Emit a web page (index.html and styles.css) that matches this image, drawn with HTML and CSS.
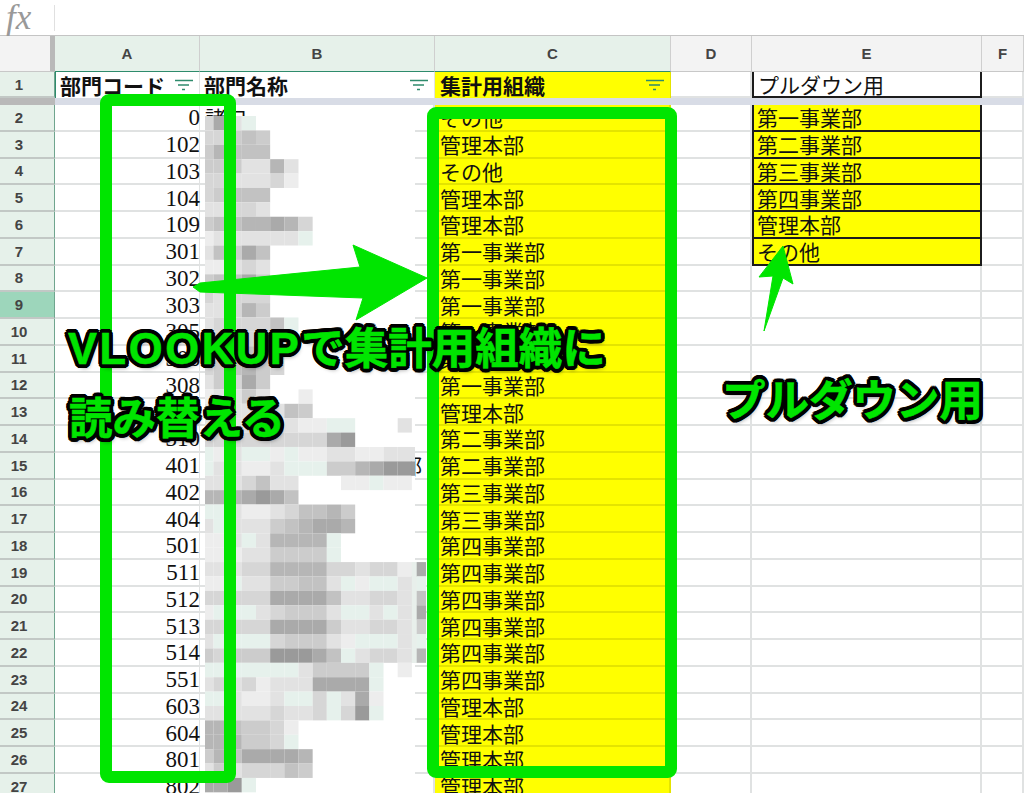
FILE: index.html
```html
<!DOCTYPE html>
<html lang="ja">
<head>
    <meta charset="UTF-8">
    <title>VLOOKUP</title>
    <link rel="stylesheet" href="styles.css">
</head>
<body>
    <div class="formula-bar">
        <span class="fx">fx</span>
        <span class="fx-sep"></span>
    </div>

    <div class="sheet">
        <!-- Column headers -->
        <div class="corner"></div>
        <div class="ch active">A</div>
        <div class="ch active">B</div>
        <div class="ch active">C</div>
        <div class="ch">D</div>
        <div class="ch">E</div>
        <div class="ch">F</div>

        <!-- Row 1 -->
        <div class="rh">1</div>
        <div class="cell title range-left">部門コード<svg class="filter" viewBox="0 0 18 12"><path d="M0 1.5H18M3 6H14M7 10.5H10"/></svg></div>
        <div class="cell title">部門名称<svg class="filter" viewBox="0 0 18 12"><path d="M0 1.5H18M3 6H14M7 10.5H10"/></svg></div>
        <div class="cell title org range-right">集計用組織<svg class="filter" viewBox="0 0 18 12"><path d="M0 1.5H18M3 6H14M7 10.5H10"/></svg></div>
        <div class="cell"></div>
        <div class="cell pick-title">プルダウン用</div>
        <div class="cell"></div>

        <!-- Frozen row divider -->
        <div class="freeze-head"></div>
        <div class="freeze"></div>

        <div class="rh">2</div><div class="cell code">0</div><div class="cell">諸口</div><div class="cell org">その他</div><div class="cell"></div><div class="cell pick">第一事業部</div><div class="cell"></div>
        <div class="rh">3</div><div class="cell code">102</div><div class="cell"></div><div class="cell org">管理本部</div><div class="cell"></div><div class="cell pick">第二事業部</div><div class="cell"></div>
        <div class="rh">4</div><div class="cell code">103</div><div class="cell"></div><div class="cell org">その他</div><div class="cell"></div><div class="cell pick">第三事業部</div><div class="cell"></div>
        <div class="rh">5</div><div class="cell code">104</div><div class="cell"></div><div class="cell org">管理本部</div><div class="cell"></div><div class="cell pick">第四事業部</div><div class="cell"></div>
        <div class="rh">6</div><div class="cell code">109</div><div class="cell"></div><div class="cell org">管理本部</div><div class="cell"></div><div class="cell pick">管理本部</div><div class="cell"></div>
        <div class="rh">7</div><div class="cell code">301</div><div class="cell"></div><div class="cell org">第一事業部</div><div class="cell"></div><div class="cell pick">その他</div><div class="cell"></div>
        <div class="rh">8</div><div class="cell code">302</div><div class="cell"></div><div class="cell org">第一事業部</div><div class="cell"></div><div class="cell"></div><div class="cell"></div>
        <div class="rh current">9</div><div class="cell code">303</div><div class="cell"></div><div class="cell org">第一事業部</div><div class="cell"></div><div class="cell"></div><div class="cell"></div>
        <div class="rh">10</div><div class="cell code">305</div><div class="cell"></div><div class="cell org">第一事業部</div><div class="cell"></div><div class="cell"></div><div class="cell"></div>
        <div class="rh">11</div><div class="cell code">306</div><div class="cell"></div><div class="cell org">第一事業部</div><div class="cell"></div><div class="cell"></div><div class="cell"></div>
        <div class="rh">12</div><div class="cell code">308</div><div class="cell"></div><div class="cell org">第一事業部</div><div class="cell"></div><div class="cell"></div><div class="cell"></div>
        <div class="rh">13</div><div class="cell code">309</div><div class="cell"></div><div class="cell org">管理本部</div><div class="cell"></div><div class="cell"></div><div class="cell"></div>
        <div class="rh">14</div><div class="cell code">310</div><div class="cell"></div><div class="cell org">第二事業部</div><div class="cell"></div><div class="cell"></div><div class="cell"></div>
        <div class="rh">15</div><div class="cell code">401</div><div class="cell tail">部</div><div class="cell org">第二事業部</div><div class="cell"></div><div class="cell"></div><div class="cell"></div>
        <div class="rh">16</div><div class="cell code">402</div><div class="cell"></div><div class="cell org">第三事業部</div><div class="cell"></div><div class="cell"></div><div class="cell"></div>
        <div class="rh">17</div><div class="cell code">404</div><div class="cell"></div><div class="cell org">第三事業部</div><div class="cell"></div><div class="cell"></div><div class="cell"></div>
        <div class="rh">18</div><div class="cell code">501</div><div class="cell"></div><div class="cell org">第四事業部</div><div class="cell"></div><div class="cell"></div><div class="cell"></div>
        <div class="rh">19</div><div class="cell code">511</div><div class="cell"></div><div class="cell org">第四事業部</div><div class="cell"></div><div class="cell"></div><div class="cell"></div>
        <div class="rh">20</div><div class="cell code">512</div><div class="cell"></div><div class="cell org">第四事業部</div><div class="cell"></div><div class="cell"></div><div class="cell"></div>
        <div class="rh">21</div><div class="cell code">513</div><div class="cell"></div><div class="cell org">第四事業部</div><div class="cell"></div><div class="cell"></div><div class="cell"></div>
        <div class="rh">22</div><div class="cell code">514</div><div class="cell"></div><div class="cell org">第四事業部</div><div class="cell"></div><div class="cell"></div><div class="cell"></div>
        <div class="rh">23</div><div class="cell code">551</div><div class="cell"></div><div class="cell org">第四事業部</div><div class="cell"></div><div class="cell"></div><div class="cell"></div>
        <div class="rh">24</div><div class="cell code">603</div><div class="cell"></div><div class="cell org">管理本部</div><div class="cell"></div><div class="cell"></div><div class="cell"></div>
        <div class="rh">25</div><div class="cell code">604</div><div class="cell"></div><div class="cell org">管理本部</div><div class="cell"></div><div class="cell"></div><div class="cell"></div>
        <div class="rh">26</div><div class="cell code">801</div><div class="cell"></div><div class="cell org">管理本部</div><div class="cell"></div><div class="cell"></div><div class="cell"></div>
        <div class="rh">27</div><div class="cell code">802</div><div class="cell"></div><div class="cell org">管理本部</div><div class="cell"></div><div class="cell"></div><div class="cell"></div>
    </div>

    <!-- Pixelated names in column B -->
    <svg id="mosaic" class="overlay" viewBox="0 0 1024 793">
        <rect x="205" y="116" width="210" height="677" fill="#fff"/>
        <rect x="411" y="447" width="4" height="14.4" fill="#e2e2e2"/>
        <rect x="411" y="461.4" width="4" height="14.4" fill="#9a9a9a"/>
        <rect x="411" y="562" width="6" height="101" fill="#e8efeb"/>
    </svg>

    <!-- Green annotations -->
    <svg class="overlay" viewBox="0 0 1024 793">
        <rect class="box" x="106" y="100" width="124" height="677" rx="3"/>
        <rect class="box" x="433" y="113" width="238" height="659" rx="3"/>
        <path class="arrow" d="M193 287L200 283L360 267L353 245L427 278L356 320L363 298L200 292Z"/>
        <path class="arrow" d="M783 246L793 284L783 278L764 331L773 276L759 277Z"/>
    </svg>

    <div class="callout callout-lookup"><span class="latin">VLOOKUP</span>で集計用組織に</div>
    <div class="callout callout-replace">読み替える</div>
    <div class="callout callout-pull">プルダウン用</div>

    <script src="mosaic.js"></script>
</body>
</html>
```

FILE: styles.css
```css
* {
    box-sizing: border-box;
}

html, body {
    margin: 0;
    height: 793px;
    overflow: hidden;
    background-color: #fff;
}

body {
    position: relative;
    font-family: "Liberation Serif", "Noto Sans CJK JP", serif;
}

.formula-bar {
    display: flex;
    align-items: center;
    height: 36px;
    border-bottom: 1px solid #c4c4c4;
}

.fx {
    width: 54px;
    padding-left: 6px;
    font-size: 35px;
    font-style: italic;
    color: #999;
    line-height: 30px;
}

.fx-sep {
    width: 1px;
    height: 26px;
    background-color: #e0e0e0;
}

.sheet {
    display: grid;
    grid-template-columns: 55px 145px 235px 236px 81px 230px 42px;
    grid-template-rows: 36px 26px 7px repeat(26, 26.76px);
}

.corner {
    background-color: #f3f3f3;
    border-right: 5px solid #b9b9b9;
    border-bottom: 1px solid #c8c8c8;
}

.ch, .rh {
    display: flex;
    align-items: center;
    justify-content: center;
    font-family: "Liberation Sans", sans-serif;
    font-size: 15px;
    font-weight: bold;
    color: #444;
}

.ch {
    background-color: #f3f3f3;
    border-right: 1px solid #cfcfcf;
    border-bottom: 1px solid #c8c8c8;
}

.ch.active {
    background-color: #e6f1ea;
    border-bottom-color: #2e8b6c;
}

.rh {
    padding-right: 16px;
    background-color: #e6f1ea;
    border-right: 1px solid #6fa58e;
    border-bottom: 2px solid #c2c8c5;
}

.rh.current {
    background-color: #9dd6bb;
}

.cell {
    display: flex;
    align-items: center;
    min-width: 0;
    padding-left: 5px;
    white-space: nowrap;
    font-size: 21px;
    color: #111;
    border-right: 2px solid #e0e2e2;
    border-bottom: 2px solid #e0e2e2;
}

.title {
    padding-left: 4px;
    font-weight: bold;
    border-right-width: 1px;
    border-bottom: 0;
}

.title.org {
    padding-left: 5px;
}

.filter {
    flex: none;
    width: 18px;
    height: 12px;
    margin-left: auto;
    margin-right: 6px;
    fill: none;
    stroke: #2e8b6c;
    stroke-width: 1.5;
}

.range-left {
    border-left: 1px solid #2e8b6c;
}

.range-right {
    border-right: 1px solid #2e8b6c;
}

.code {
    justify-content: flex-end;
    padding-top: 2px;
    padding-right: 0;
    font-size: 23px;
    border-right: 0;
    box-shadow: inset -1px 0 #e0e2e2;
}

.tail {
    justify-content: flex-end;
    padding-right: 11px;
}

.org {
    background-color: #ff0;
    border-bottom-color: #e4e400;
    border-right-color: #e4e400;
}

.pick-title, .pick {
    padding-left: 3px;
    border: 2px solid #1c1c1c;
    border-top: 0;
}

.pick-title {
    padding-left: 4px;
}

.pick {
    background-color: #ff0;
}

.freeze-head {
    background-color: #b9b9b9;
}

.freeze {
    grid-column: 2 / -1;
    background-color: #d8dce6;
}

.overlay {
    position: absolute;
    top: 0;
    left: 0;
    width: 1024px;
    height: 793px;
}

.box {
    fill: none;
    stroke: #00e500;
    stroke-width: 12;
}

.arrow {
    fill: #00e500;
    stroke: #00e500;
    stroke-width: 1;
    stroke-linejoin: round;
}

.callout {
    position: absolute;
    font-family: "Liberation Sans", "Noto Sans CJK JP", sans-serif;
    font-size: 43.5px;
    font-weight: bold;
    line-height: 60px;
    white-space: nowrap;
    color: #00e500;
    -webkit-text-stroke: 0.5px #00e500;
    /* rounded black outline, then a soft drop shadow */
    text-shadow:
        4px 0 #000, 3.7px 1.5px #000, 2.8px 2.8px #000, 1.5px 3.7px #000,
        0 4px #000, -1.5px 3.7px #000, -2.8px 2.8px #000, -3.7px 1.5px #000,
        -4px 0 #000, -3.7px -1.5px #000, -2.8px -2.8px #000, -1.5px -3.7px #000,
        0 -4px #000, 1.5px -3.7px #000, 2.8px -2.8px #000, 3.7px -1.5px #000,
        2px 4px 4px rgba(0, 0, 0, 0.4);
}

.latin {
    letter-spacing: 2.6px;
}

.callout-lookup {
    top: 319px;
    left: 68px;
}

.callout-replace {
    top: 389px;
    left: 69px;
}

.callout-pull {
    top: 371px;
    left: 722px;
}
```

FILE: mosaic.js
```js
// Each string is one row of blocks, each character one block's shade
var shades = {
    g: '#e6f1ec', 2: '#ededed', 3: '#e2e2e2', 4: '#d6d6d6', 5: '#cccccc',
    6: '#c2c2c2', 7: '#b6b6b6', 8: '#aaaaaa', 9: '#9a9a9a'
};

var rows = [
    '483g', '44565', '57666', '5553373', '4433342', '45666', '33443', '56677874',
    '2333333g', '36586', '22343', '56685', '43444', '33475', '344446g', '444444',
    '555654', '456754', '35485', '23353..2', '33333365', '333333322gg...3',
    '44444444489', 'g23gg2g22332233', 'g33223ggg557899', '3334633...22g22',
    '7778986', 'gg322346675', '3g333567887', '223g37777g', '222335555g',
    '3334477774434428', '22g3355663g2gg3g', '4444488886334436', '2ggg345553gg3g38',
    '4444488885334435', '3gggg455532ggg3g', '5455599986g34437', 'ggggggg35555g.2',
    '343423338888g', 'gg3223gg4g382', '333334334g49g', '7765542', '777554g',
    '57688887', '35344465', '889g'
];

var mosaic = document.getElementById('mosaic');

rows.forEach(function (row, r) {
    row.split('').forEach(function (shade, c) {
        if (shade === '.') return;
        var left = Math.max(205, 199.3 + c * 14.17);
        if (c === 15) left = 416.7;
        var right = 199.3 + (c + 1) * 14.17;
        var rect = document.createElementNS('http://www.w3.org/2000/svg', 'rect');
        rect.setAttribute('x', left);
        rect.setAttribute('y', 116 + r * 14.39);
        rect.setAttribute('width', right - left);
        rect.setAttribute('height', 14.39);
        rect.setAttribute('fill', shades[shade]);
        mosaic.appendChild(rect);
    });
});
```
